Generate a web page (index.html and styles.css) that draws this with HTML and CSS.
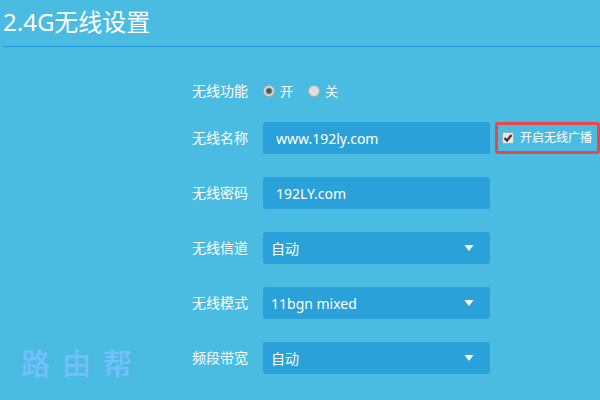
FILE: index.html
```html
<!DOCTYPE html>
<html lang="zh-CN">
<head>
<meta charset="utf-8">
<meta name="viewport" content="width=device-width, initial-scale=1">
<title>2.4G无线设置</title>
<link rel="stylesheet" href="styles.css">
</head>
<body>
<main class="page">
  <h1 class="title">2.4G无线设置</h1>
  <form class="form">
    <div class="row row-radio" role="radiogroup" aria-labelledby="power">
      <span class="label" id="power">无线功能</span>
      <div class="options">
        <label class="option"><input class="radio" type="radio" name="power" checked>开</label>
        <label class="option"><input class="radio" type="radio" name="power">关</label>
      </div>
    </div>
    <div class="row">
      <label class="label" for="ssid">无线名称</label>
      <input class="field" id="ssid" type="text" value="www.192ly.com">
      <label class="broadcast"><input class="check" type="checkbox" checked>开启无线广播</label>
    </div>
    <div class="row">
      <label class="label" for="password">无线密码</label>
      <input class="field" id="password" type="text" value="192LY.com">
    </div>
    <div class="row">
      <label class="label" for="channel">无线信道</label>
      <div class="select-wrap">
        <select class="field select" id="channel"><option>自动</option></select>
        <svg class="arrow" viewBox="0 0 10 6" aria-hidden="true"><path d="M0.5 0H9.5L5 6Z"/></svg>
      </div>
    </div>
    <div class="row">
      <label class="label" for="mode">无线模式</label>
      <div class="select-wrap">
        <select class="field select" id="mode"><option>11bgn mixed</option></select>
        <svg class="arrow" viewBox="0 0 10 6" aria-hidden="true"><path d="M0.5 0H9.5L5 6Z"/></svg>
      </div>
    </div>
    <div class="row">
      <label class="label" for="bandwidth">频段带宽</label>
      <div class="select-wrap">
        <select class="field select" id="bandwidth"><option>自动</option></select>
        <svg class="arrow" viewBox="0 0 10 6" aria-hidden="true"><path d="M0.5 0H9.5L5 6Z"/></svg>
      </div>
    </div>
  </form>
  <div class="watermark"><span>路</span><span>由</span><span>帮</span></div>
</main>
</body>
</html>
```
FILE: styles.css
```css
* {
  box-sizing: border-box;
}

body {
  margin: 0;
  background: #4bbce1;
  color: #fff;
  font-family: "Noto Sans", "Noto Sans CJK SC", sans-serif;
  font-size: 14px;
}

.page {
  position: relative;
  min-height: 100vh;
  padding-left: 3px;
}

.title {
  margin: 0;
  height: 47px;
  border-bottom: 1px solid #2396dc;
  font-size: 24px;
  font-weight: 400;
  line-height: 44px;
}

.form {
  display: flex;
  flex-direction: column;
  gap: 23px;
  padding: 34px 0 24px 189px;
}

.row {
  display: grid;
  grid-template-columns: 56px 227px auto;
  column-gap: 15px;
  align-items: center;
  height: 32px;
}

.row-radio {
  height: 18px;
}

.label {
  line-height: 20px;
  white-space: nowrap;
}

.options {
  display: flex;
  gap: 15px;
}

.option {
  display: flex;
  align-items: center;
  gap: 5px;
  font-size: 13px;
  line-height: 16px;
}

.radio,
.check {
  flex: none;
  appearance: none;
  width: 12px;
  height: 12px;
  margin: 0;
  border: 1px solid #a3aeb3;
  background: #dedede;
}

.radio {
  border-radius: 50%;
}

.radio:checked {
  background: radial-gradient(circle, #555 0 2px, #dedede 4px);
}

.check {
  border-radius: 2px;
  background: #e6e6e6 url("data:image/svg+xml,%3Csvg xmlns='http://www.w3.org/2000/svg' viewBox='0 0 10 10'%3E%3Cpath d='M1.5 5L4 7.6L8.5 2' fill='none' stroke='%23333' stroke-width='2.2'/%3E%3C/svg%3E") center / 10px no-repeat;
}

.field {
  width: 100%;
  height: 32px;
  padding: 0 13px;
  border: 0;
  border-radius: 3px;
  background: #2ba1da;
  color: #fff;
  font: inherit;
}

.select-wrap {
  position: relative;
}

.select {
  display: block;
  appearance: none;
  padding: 0 8px;
}

.arrow {
  position: absolute;
  top: 13px;
  right: 16px;
  width: 10px;
  height: 6px;
  fill: #fff;
  pointer-events: none;
}

.broadcast {
  display: flex;
  align-items: center;
  gap: 6px;
  height: 32px;
  margin-left: -10px;
  padding-left: 4px;
  border: 3px solid #ee4549;
  border-radius: 3px;
  font-size: 12px;
  line-height: 16px;
  white-space: nowrap;
}

.watermark {
  position: absolute;
  bottom: 16px;
  left: 21px;
  display: flex;
  gap: 12px;
  color: #75bfff;
  font-size: 29px;
  font-weight: 500;
  line-height: 40px;
  pointer-events: none;
}
```
